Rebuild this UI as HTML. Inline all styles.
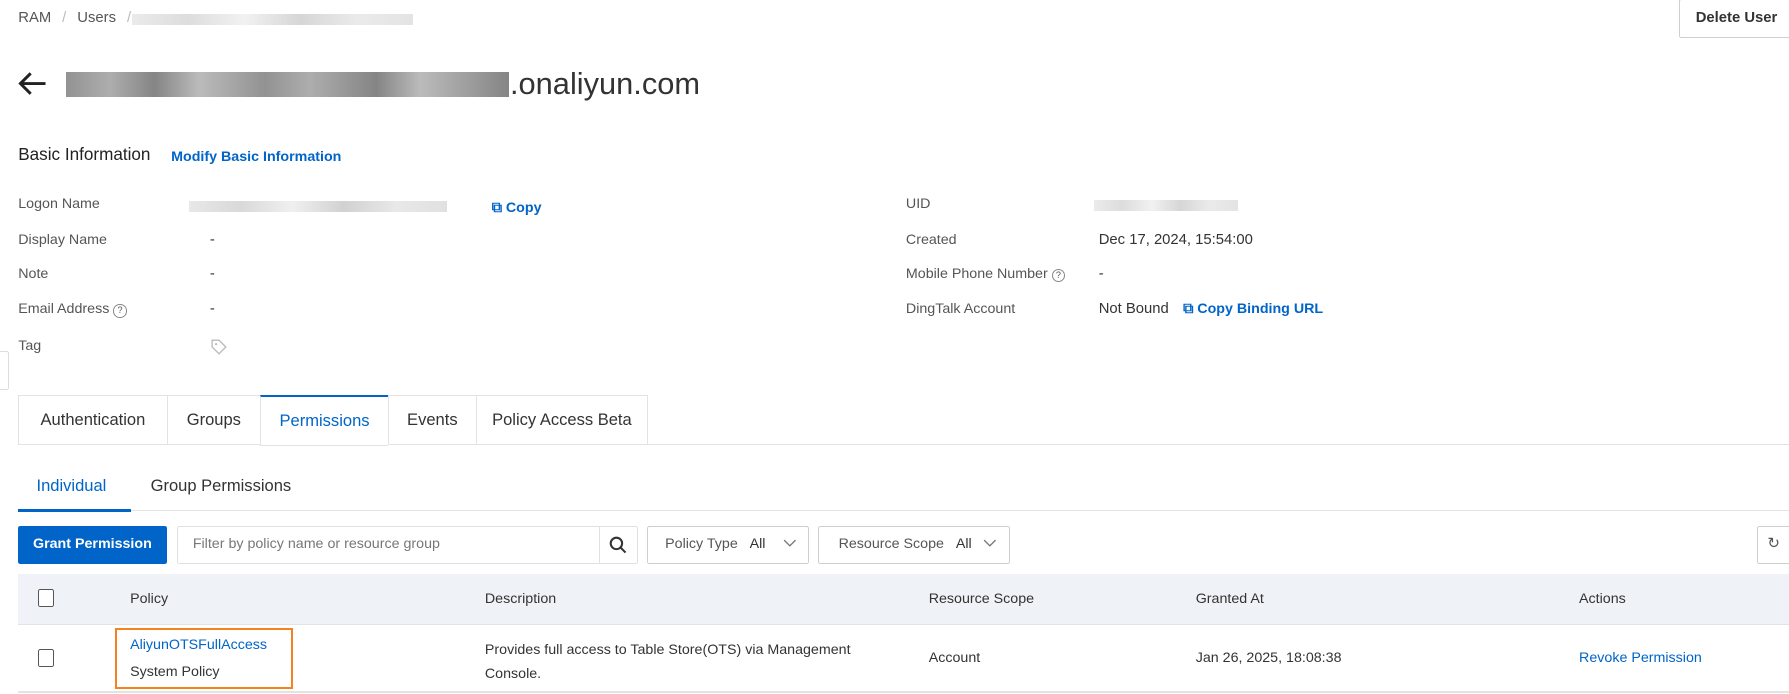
<!DOCTYPE html>
<html><head><meta charset="utf-8"><style>
html,body{margin:0;padding:0;background:#fff;overflow:hidden}
body{width:1789px;height:694px}
#w{zoom:1.14094;position:relative;width:1568px;height:608px;font-family:"Liberation Sans",sans-serif;color:#333;font-size:13px}
.a{position:absolute;white-space:nowrap}
.blue{color:#0064c8}
.lbl{color:#555;font-size:12.5px}
.blur{background:linear-gradient(90deg,#ccc,#aaa 20%,#ddd 40%,#999 60%,#ccc 80%,#bbb);opacity:.8}
.tab{position:absolute;top:346px;height:44px;border:1px solid #e3e3e3;border-right:none;box-sizing:border-box;font-size:14.5px;line-height:42px;text-align:center;color:#333;background:#fff}
.box{position:absolute;border:1px solid #cfcfcf;box-sizing:border-box;border-radius:2px}
.th{position:absolute;top:518px;font-size:12.5px;color:#333}
.td{position:absolute;font-size:12.5px;color:#333}
.td.blue{color:#0064c8}
.cb{position:absolute;width:14px;height:16px;border:1px solid #555;border-radius:2px;box-sizing:border-box;background:#fff}
</style></head><body><div id="w">
<div class="a lbl" style="left:16px;top:9px;font-size:13px;color:#555">RAM <span style="color:#bbb;margin:0 6px">/</span> Users <span style="color:#bbb;margin:0 6px">/</span></div>
<div class="a blur" style="left:116px;top:12px;width:246px;height:10px;opacity:.4"></div>
<div class="box" style="left:1472px;top:-1px;width:100px;height:34px;font-size:13px;font-weight:bold;line-height:32px;text-align:center;color:#333">Delete User</div>

<svg class="a" style="left:15px;top:62px" width="26" height="22" viewBox="0 0 26 22"><path d="M25 11H3M12 2L3 11l9 9" stroke="#222" stroke-width="2.6" fill="none"/></svg>
<div class="a blur" style="left:58px;top:63px;width:388px;height:22px;background:linear-gradient(90deg,#777,#999 10%,#666 20%,#aaa 30%,#777 45%,#999 55%,#666 70%,#aaa 80%,#666)"></div>
<div class="a" style="left:447px;top:58px;font-size:27px;color:#333">.onaliyun.com</div>

<div class="a" style="left:16px;top:127px;font-size:15px;color:#222">Basic Information</div>
<div class="a blue" style="left:150px;top:131px;font-size:12.5px;font-weight:bold">Modify Basic Information</div>

<div class="a lbl" style="left:16px;top:172px">Logon Name</div>
<div class="a blur" style="left:166px;top:176px;width:226px;height:10px;opacity:.45"></div>
<div class="a blue" style="left:431px;top:175px;font-size:12.5px;font-weight:bold">⧉ Copy</div>
<div class="a lbl" style="left:16px;top:203px">Display Name</div><div class="a" style="left:184px;top:203px">-</div>
<div class="a lbl" style="left:16px;top:233px">Note</div><div class="a" style="left:184px;top:233px">-</div>
<div class="a lbl" style="left:16px;top:264px">Email Address <span style="border:1px solid #888;border-radius:50%;display:inline-block;width:10px;height:10px;line-height:10px;text-align:center;font-size:8px">?</span></div><div class="a" style="left:184px;top:264px">-</div>
<div class="a lbl" style="left:16px;top:296px">Tag</div>
<svg class="a" style="left:185px;top:297px" width="14" height="14" viewBox="0 0 14 14"><path d="M1 1h6l6 6-6 6-6-6z" fill="none" stroke="#bbb" stroke-width="1.2"/><circle cx="4.5" cy="4.5" r="1" fill="#bbb"/></svg>
<div class="a" style="left:-3px;top:308px;width:9px;height:32px;border:1px solid #ddd;border-radius:2px;background:#fff"></div>

<div class="a lbl" style="left:794px;top:172px">UID</div>
<div class="a blur" style="left:959px;top:175px;width:126px;height:10px;opacity:.4"></div>
<div class="a lbl" style="left:794px;top:203px">Created</div><div class="a" style="left:963px;top:203px">Dec 17, 2024, 15:54:00</div>
<div class="a lbl" style="left:794px;top:233px">Mobile Phone Number <span style="border:1px solid #888;border-radius:50%;display:inline-block;width:10px;height:10px;line-height:10px;text-align:center;font-size:8px">?</span></div><div class="a" style="left:963px;top:233px">-</div>
<div class="a lbl" style="left:794px;top:264px">DingTalk Account</div><div class="a" style="left:963px;top:264px">Not Bound</div>
<div class="a blue" style="left:1037px;top:264px;font-weight:bold;font-size:12.5px">⧉ Copy Binding URL</div>

<div class="a" style="left:16px;top:389px;width:1552px;height:1px;background:#e3e3e3"></div>
<div class="tab" style="left:16px;width:130px">Authentication</div>
<div class="tab" style="left:146px;width:82px">Groups</div>
<div class="tab" style="left:228px;width:112px;border-top:2px solid #0064c8;color:#0064c8;height:45px">Permissions</div>
<div class="tab" style="left:340px;width:77px">Events</div>
<div class="tab" style="left:417px;width:151px;border-right:1px solid #e3e3e3">Policy Access Beta</div>

<div class="a" style="left:16px;top:447px;width:1552px;height:1px;background:#e3e3e3"></div>
<div class="a blue" style="left:32px;top:417px;font-size:14.5px">Individual</div>
<div class="a" style="left:16px;top:446px;width:99px;height:3px;background:#0064c8"></div>
<div class="a" style="left:132px;top:417px;font-size:14.5px;color:#333">Group Permissions</div>

<div class="a" style="left:16px;top:461px;width:130px;height:33px;background:#0064c8;border-radius:2px;color:#fff;font-weight:bold;font-size:12.5px;line-height:33px;text-align:center">Grant Permission</div>
<div class="box" style="left:155px;top:461px;width:404px;height:33px;border-color:#e0e0e0"></div>
<div class="a" style="left:525px;top:461px;width:1px;height:33px;background:#e0e0e0"></div>
<div class="a" style="left:169px;top:470px;color:#777;font-size:12.5px">Filter by policy name or resource group</div>
<svg class="a" style="left:534px;top:470px" width="16" height="16" viewBox="0 0 16 16"><circle cx="6.5" cy="6.5" r="5" fill="none" stroke="#333" stroke-width="1.8"/><path d="M10 10l4.5 4.5" stroke="#333" stroke-width="1.8"/></svg>
<div class="box" style="left:567px;top:461px;width:142px;height:33px"></div>
<div class="a" style="left:583px;top:470px;color:#555;font-size:12.5px">Policy Type &nbsp;&nbsp;<span style="color:#333">All</span></div>
<svg class="a" style="left:686px;top:472px" width="12" height="8" viewBox="0 0 12 8"><path d="M1 1l5 5 5-5" fill="none" stroke="#777" stroke-width="1.2"/></svg>
<div class="box" style="left:717px;top:461px;width:168px;height:33px"></div>
<div class="a" style="left:735px;top:470px;color:#555;font-size:12.5px">Resource Scope &nbsp;&nbsp;<span style="color:#333">All</span></div>
<svg class="a" style="left:862px;top:472px" width="12" height="8" viewBox="0 0 12 8"><path d="M1 1l5 5 5-5" fill="none" stroke="#777" stroke-width="1.2"/></svg>
<div class="box" style="left:1540px;top:461px;width:34px;height:33px"></div>
<div class="a" style="left:1549px;top:469px;font-size:13px;color:#555">↻</div>

<div class="a" style="left:16px;top:503px;width:1552px;height:44px;background:#eff2f6;border-bottom:1px solid #e3e3e3"></div>
<div class="cb" style="left:33px;top:516px"></div>
<div class="th" style="left:114px">Policy</div>
<div class="th" style="left:425px">Description</div>
<div class="th" style="left:814px">Resource Scope</div>
<div class="th" style="left:1048px">Granted At</div>
<div class="th" style="left:1384px">Actions</div>

<div class="a" style="left:16px;top:606px;width:1552px;height:1px;background:#e3e3e3"></div>
<div class="cb" style="left:33px;top:569px"></div>
<div class="a" style="left:101px;top:550px;width:156px;height:54px;border:2px solid #f58220;box-sizing:border-box"></div>
<div class="td blue" style="left:114px;top:558px">AliyunOTSFullAccess</div>
<div class="td" style="left:114px;top:582px">System Policy</div>
<div class="td" style="left:425px;top:560px;line-height:21px">Provides full access to Table Store(OTS) via Management<br>Console.</div>
<div class="td" style="left:814px;top:570px">Account</div>
<div class="td" style="left:1048px;top:570px">Jan 26, 2025, 18:08:38</div>
<div class="td blue" style="left:1384px;top:570px">Revoke Permission</div>
</div></body></html>
